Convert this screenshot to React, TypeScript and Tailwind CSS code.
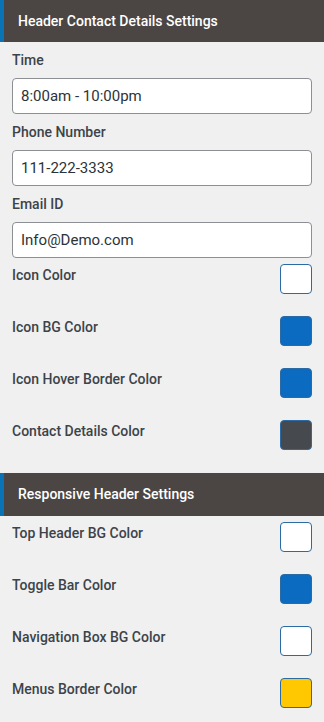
import React from "react";

const contactFields = [
  { label: "Time", value: "8:00am - 10:00pm" },
  { label: "Phone Number", value: "111-222-3333" },
  { label: "Email ID", value: "Info@Demo.com" },
];

const contactColors = [
  { label: "Icon Color", swatch: "bg-white" },
  { label: "Icon BG Color", swatch: "bg-[#0a6bc1]" },
  { label: "Icon Hover Border Color", swatch: "bg-[#0a6bc1]" },
  { label: "Contact Details Color", swatch: "bg-[#46494d]" },
];

const responsiveColors = [
  { label: "Top Header BG Color", swatch: "bg-white" },
  { label: "Toggle Bar Color", swatch: "bg-[#0a6bc1]" },
  { label: "Navigation Box BG Color", swatch: "bg-white" },
  { label: "Menus Border Color", swatch: "bg-[#ffc800]" },
];

function SectionHeader({ title, tall }: { title: string; tall?: boolean }) {
  return (
    <div
      className={`flex items-center border-l-4 border-[#0a73b5] bg-[#4b4644] pl-[14px] ${
        tall ? "h-[43px]" : "h-[42px]"
      }`}
    >
      <span className="text-[14px] font-medium text-white">{title}</span>
    </div>
  );
}

function ColorRow({ label, swatch }: { label: string; swatch: string }) {
  return (
    <div className="flex h-[52px] items-start justify-between">
      <span className="mt-[1px] text-[14px] leading-5 font-medium text-[#3c434a]">{label}</span>
      <div className={`h-[30px] w-[32px] rounded-[4px] border border-[#2c6aa3] ${swatch}`} />
    </div>
  );
}

export default function App() {
  return (
    <div
      className="min-h-[722px] w-[324px] bg-[#f0f0f0]"
      style={{ fontFamily: "Roboto, 'Liberation Sans', sans-serif" }}
    >
      <SectionHeader title="Header Contact Details Settings" />

      <div className="px-3 pt-[8px]">
        {contactFields.map((f) => (
          <div key={f.label} className="mb-2">
            <div className="mb-2 text-[14px] leading-5 font-medium text-[#3c434a]">{f.label}</div>
            <input
              readOnly
              value={f.value}
              className="h-[36px] w-full rounded-[4px] border border-[#8c8f94] bg-white px-2 text-[15px] text-[#2c3338] outline-none"
            />
          </div>
        ))}

        <div className="-mt-[2px]">
          {contactColors.map((c) => (
            <ColorRow key={c.label} {...c} />
          ))}
        </div>
      </div>

      <div className="pt-[1px]">
        <SectionHeader title="Responsive Header Settings" tall />
      </div>

      <div className="px-3 pt-[6px]">
        {responsiveColors.map((c) => (
          <ColorRow key={c.label} {...c} />
        ))}
      </div>
    </div>
  );
}
